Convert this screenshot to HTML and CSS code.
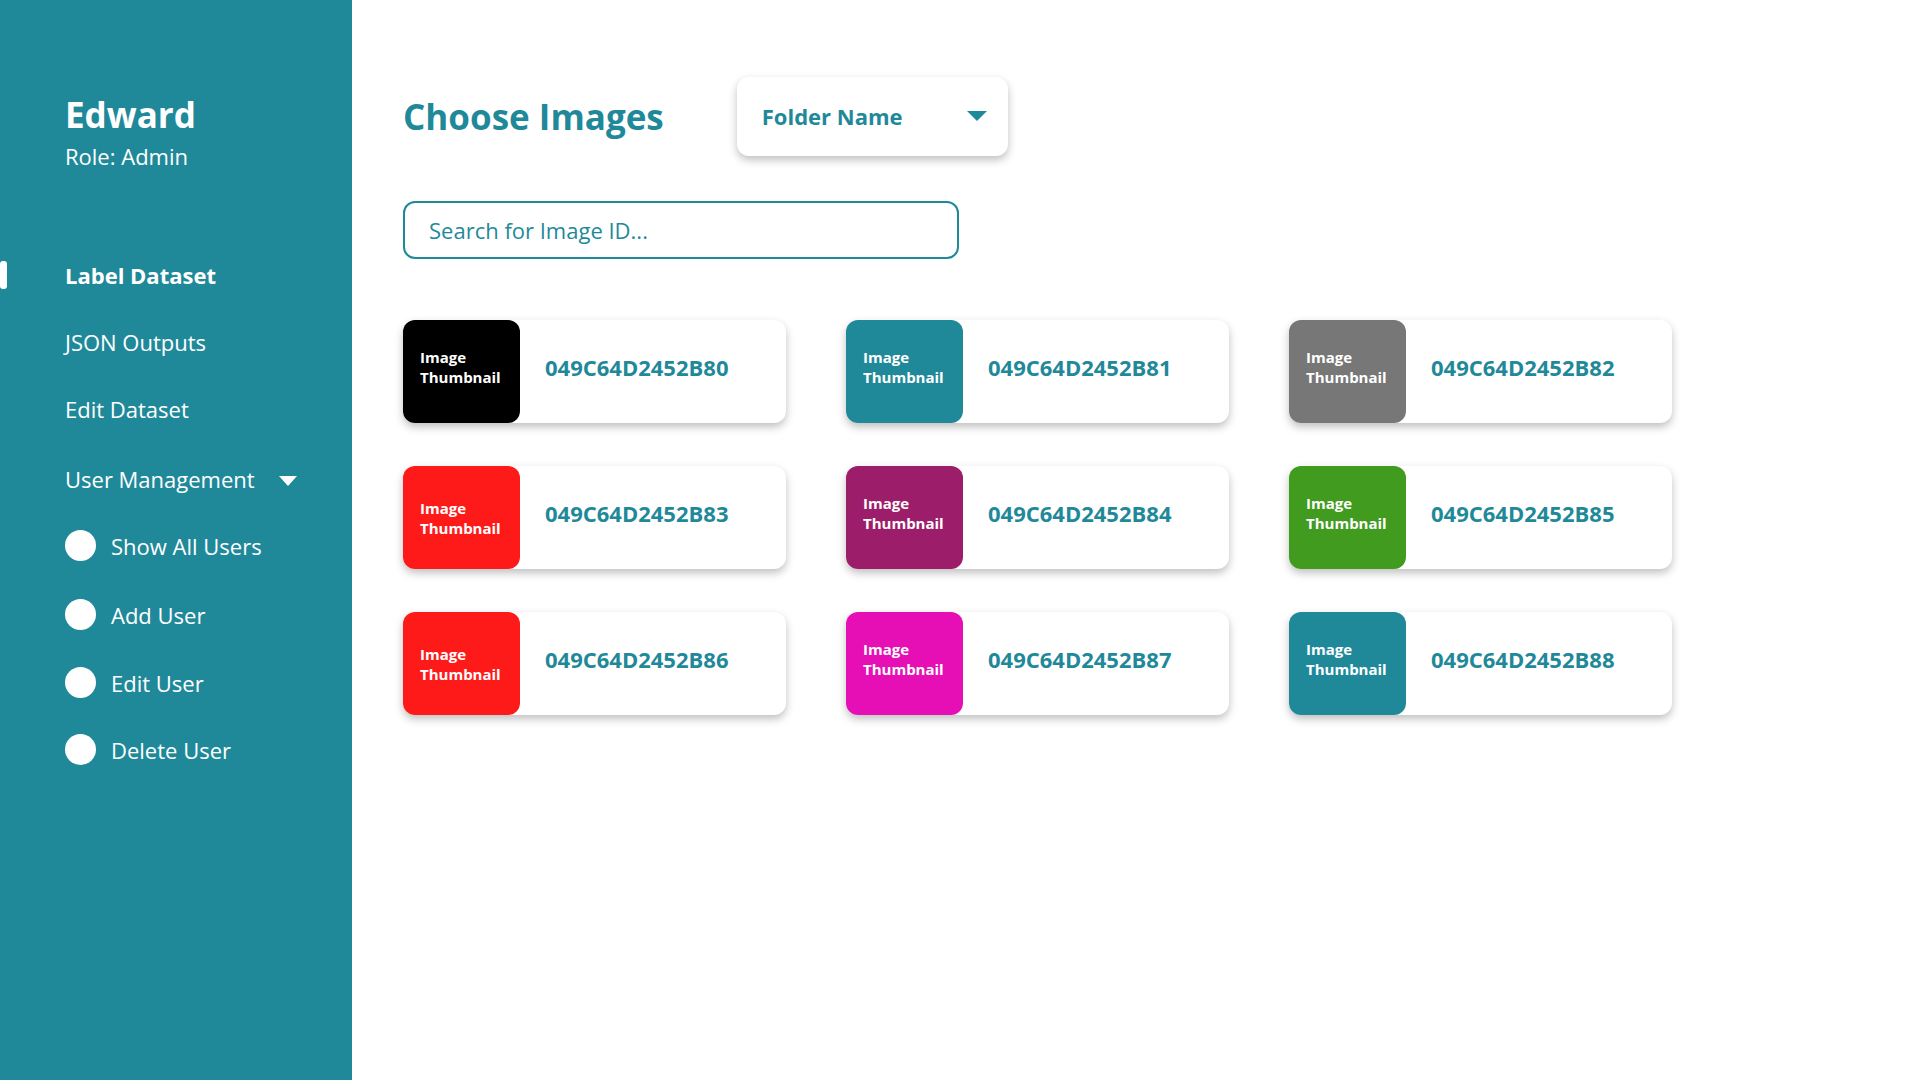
FILE: index.html
```html
<!DOCTYPE html>
<html lang="en">
<head>
<meta charset="utf-8">
<title>Choose Images</title>
<link rel="stylesheet" href="styles.css">
</head>
<body>
<div class="app">
  <aside class="sidebar">
    <div class="user">
      <div class="user-name">Edward</div>
      <div class="user-role">Role: Admin</div>
    </div>
    <nav class="nav">
      <div class="nav-item active"><span class="indicator"></span>Label Dataset</div>
      <div class="nav-item">JSON Outputs</div>
      <div class="nav-item">Edit Dataset</div>
      <div class="nav-item nav-group">User Management
        <svg class="caret" width="18" height="10" viewBox="0 0 18 10"><path d="M0 0H18L9 10Z" fill="#fff"/></svg>
      </div>
      <div class="nav-item sub"><span class="dot"></span>Show All Users</div>
      <div class="nav-item sub sub-add"><span class="dot"></span>Add User</div>
      <div class="nav-item sub sub-edit"><span class="dot"></span>Edit User</div>
      <div class="nav-item sub"><span class="dot"></span>Delete User</div>
    </nav>
  </aside>
  <main class="main">
    <div class="header">
      <h1 class="title">Choose Images</h1>
      <div class="folder">
        <span>Folder Name</span>
        <svg width="20" height="10" viewBox="0 0 20 10"><path d="M0 0H20L10 10Z" fill="#1f899a"/></svg>
      </div>
    </div>
    <div class="search">Search for Image ID...</div>
    <div class="grid">
      <div class="card"><div class="thumb c-black">Image<br>Thumbnail</div><div class="id">049C64D2452B80</div></div>
      <div class="card"><div class="thumb c-teal">Image<br>Thumbnail</div><div class="id">049C64D2452B81</div></div>
      <div class="card"><div class="thumb c-grey">Image<br>Thumbnail</div><div class="id">049C64D2452B82</div></div>
      <div class="card"><div class="thumb c-red low">Image<br>Thumbnail</div><div class="id">049C64D2452B83</div></div>
      <div class="card"><div class="thumb c-purple">Image<br>Thumbnail</div><div class="id">049C64D2452B84</div></div>
      <div class="card"><div class="thumb c-green">Image<br>Thumbnail</div><div class="id">049C64D2452B85</div></div>
      <div class="card"><div class="thumb c-red low">Image<br>Thumbnail</div><div class="id">049C64D2452B86</div></div>
      <div class="card"><div class="thumb c-magenta">Image<br>Thumbnail</div><div class="id">049C64D2452B87</div></div>
      <div class="card"><div class="thumb c-teal">Image<br>Thumbnail</div><div class="id">049C64D2452B88</div></div>
    </div>
  </main>
</div>
</body>
</html>
```
FILE: styles.css
```css
* { box-sizing: border-box; }
html, body { margin: 0; padding: 0; }
body {
  font-family: "Open Sans", "Liberation Sans", sans-serif;
  background: #fff;
  color: #1f899a;
}
.app {
  display: flex;
  min-height: 1080px;
}
.sidebar {
  width: 352px;
  flex: 0 0 352px;
  background: #1f899a;
  color: #fff;
  padding: 93px 0 0 65px;
}
.user-name {
  font-size: 35px;
  font-weight: 700;
  line-height: 44px;
}
.user-role {
  font-size: 22px;
  line-height: 30px;
  margin-top: 4px;
}
.nav {
  display: flex;
  flex-direction: column;
  gap: 37px;
  margin-top: 89px;
}
.nav-item {
  position: relative;
  display: flex;
  align-items: center;
  font-size: 22px;
  line-height: 30px;
  height: 30px;
}
.nav-item.active { font-weight: 700; }
.indicator {
  position: absolute;
  left: -65px;
  top: 1px;
  width: 7px;
  height: 28px;
  border-radius: 3px;
  background: #fff;
}
.nav-group { margin-top: 3px; }
.caret { margin-left: 24px; margin-top: 4px; }
.sub { gap: 15px; }
.sub-add { margin-top: 2px; }
.sub-edit { margin-top: 1px; }
.dot {
  width: 31px;
  height: 31px;
  border-radius: 50%;
  background: #fff;
  flex: 0 0 31px;
  margin-top: -1px;
}
.main {
  flex: 1;
  padding: 77px 0 0 51px;
}
.header {
  display: flex;
  align-items: center;
  gap: 73px;
}
.title {
  margin: 0;
  font-size: 35px;
  line-height: 44px;
  font-weight: 700;
  color: #1f899a;
}
.folder {
  width: 271px;
  height: 79px;
  border-radius: 12px;
  background: #fff;
  box-shadow: 0 4px 8px rgba(0, 0, 0, 0.25);
  display: flex;
  align-items: center;
  justify-content: space-between;
  padding: 0 21px 1px 25px;
  font-size: 22px;
  font-weight: 700;
}
.search {
  margin-top: 45px;
  width: 556px;
  height: 58px;
  border: 2px solid #1f899a;
  border-radius: 12px;
  padding-left: 24px;
  display: flex;
  align-items: center;
  font-size: 22px;
  color: #1f899a;
}
.grid {
  margin-top: 61px;
  display: grid;
  grid-template-columns: repeat(3, 383px);
  column-gap: 60px;
  row-gap: 43px;
}
.card {
  height: 103px;
  background: #fff;
  border-radius: 12px;
  box-shadow: 0 4px 8px rgba(0, 0, 0, 0.25);
  display: flex;
  align-items: center;
}
.thumb {
  align-self: stretch;
  width: 117px;
  flex: 0 0 117px;
  border-radius: 12px;
  color: #fff;
  font-size: 15px;
  font-weight: 700;
  line-height: 20px;
  display: flex;
  align-items: center;
  padding: 0 0 9px 17px;
}
.thumb.low { padding-bottom: 0; }
.id {
  margin-left: 25px;
  margin-bottom: 9px;
  font-size: 22px;
  line-height: 30px;
  font-weight: 700;
  color: #1f899a;
}
.c-black { background: #000; }
.c-teal { background: #1f899a; }
.c-grey { background: #777; }
.c-red { background: #ff1a1a; }
.c-purple { background: #9c1e6b; }
.c-green { background: #419b1f; }
.c-magenta { background: #e50fb5; }
```
